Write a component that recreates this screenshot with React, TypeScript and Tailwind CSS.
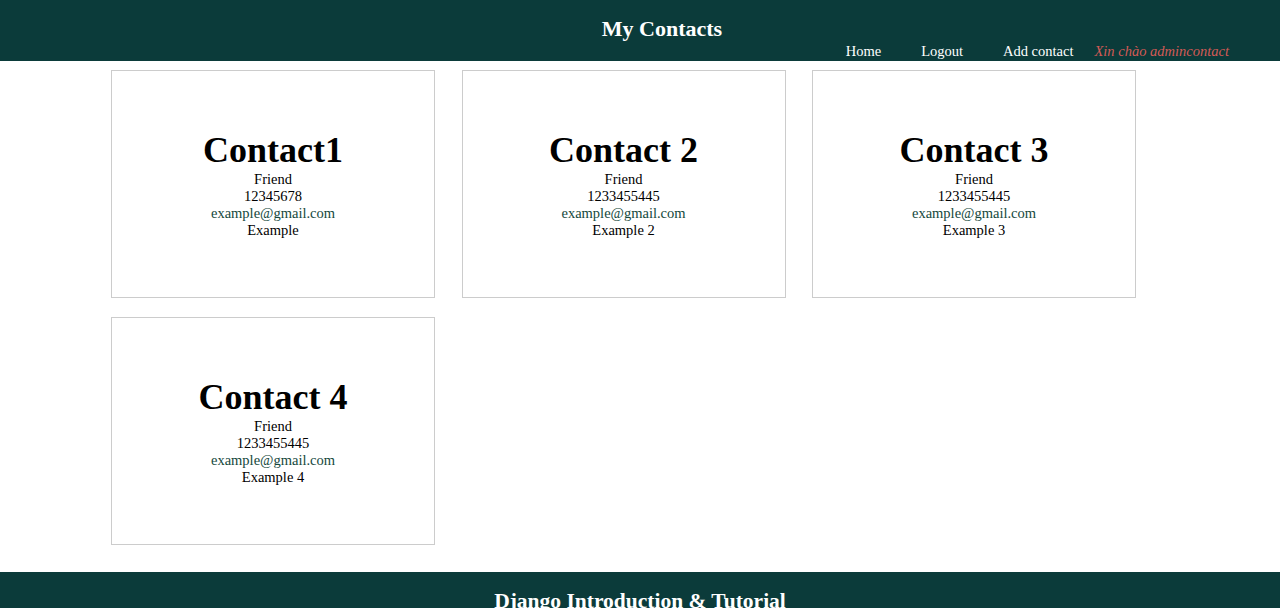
import React from "react";

type Contact = {
  name: string;
  group: string;
  phone: string;
  email: string;
  note: string;
};

const contacts: Contact[] = [
  { name: "Contact1", group: "Friend", phone: "12345678", email: "example@gmail.com", note: "Example" },
  { name: "Contact 2", group: "Friend", phone: "1233455445", email: "example@gmail.com", note: "Example 2" },
  { name: "Contact 3", group: "Friend", phone: "1233455445", email: "example@gmail.com", note: "Example 3" },
  { name: "Contact 4", group: "Friend", phone: "1233455445", email: "example@gmail.com", note: "Example 4" },
];

export default function App() {
  return (
    <div className="min-h-screen bg-white text-black font-['Liberation_Serif','Times_New_Roman',serif]">
      {/* header */}
      <header className="h-[61px] bg-[#0b3b3a] text-white">
        <h1 className="pt-[16px] pl-[44px] text-center text-[22px] leading-[26px] font-bold">
          My Contacts
        </h1>
        <nav className="mt-[1px] flex justify-end pr-[51px] text-[14.5px] leading-[17px]">
          <a className="mr-[40px]">Home</a>
          <a className="mr-[40px]">Logout</a>
          <a className="mr-[21px]">Add contact</a>
          <span className="italic text-[#d25a56]">Xin chào admincontact</span>
        </nav>
      </header>

      {/* contact cards */}
      <main className="pt-[9px] pb-[27px] pl-[111px]">
        <div className="grid grid-cols-[repeat(3,324px)] gap-x-[26.5px] gap-y-[19px]">
          {contacts.map((c) => (
            <div
              key={c.name}
              className="h-[228px] border border-[#cccccc] flex flex-col items-center justify-center text-center"
            >
              <h2 className="text-[36px] leading-[41px] font-bold">{c.name}</h2>
              <div className="text-[14.5px] leading-[17px]">{c.group}</div>
              <div className="text-[14.5px] leading-[17px]">{c.phone}</div>
              <div className="text-[14.5px] leading-[17px] text-[#14483c]">{c.email}</div>
              <div className="text-[14.5px] leading-[17px]">{c.note}</div>
            </div>
          ))}
        </div>
      </main>

      <footer className="bg-[#0b3b3a] text-white pt-[16px] pb-[16px]">
        <h2 className="text-center text-[21.5px] leading-[26px] font-bold">
          Django Introduction &amp; Tutorial
        </h2>
      </footer>
    </div>
  );
}
